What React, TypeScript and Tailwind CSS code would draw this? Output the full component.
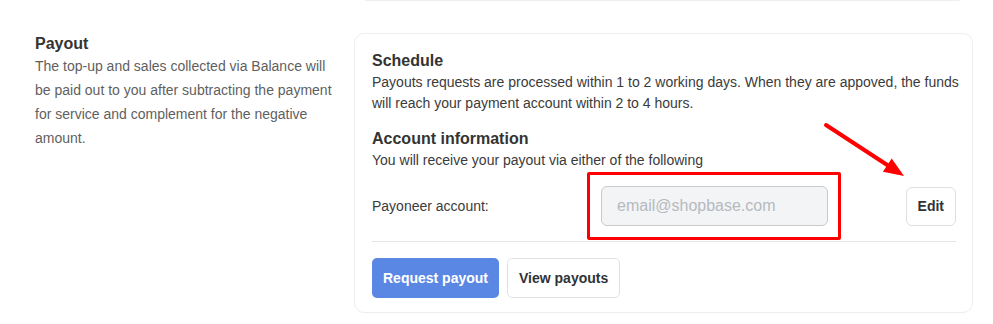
import React from "react";

const font = { fontFamily: '"Liberation Sans", Arial, sans-serif' };

const AnnotationArrow = () => (
  <svg
    className="absolute left-[466px] top-[82px] pointer-events-none"
    width="90"
    height="65"
    viewBox="0 0 90 65"
  >
    <line x1="5" y1="9" x2="67" y2="49.5" stroke="#ff0000" strokeWidth="4" strokeLinecap="round" />
    <polygon points="83,60 61.9,55.8 70.7,42.4" fill="#ff0000" />
  </svg>
);

const PayoutCard = () => {
  return (
    <div className="relative w-[619px] shrink-0 rounded-[10px] border border-[#eeeeee] bg-white pl-[17px] pr-[16px] pt-[16px] pb-[14px] text-[#3b3b3b]">
      <h2 className="text-[16px] leading-[22px] font-bold text-[#333333]">Schedule</h2>
      <p className="mr-[-10px] text-[14px] leading-[21px]">
        Payouts requests are processed within 1 to 2 working days. When they are appoved, the funds
        will reach your payment account within 2 to 4 hours.
      </p>

      <h2 className="mt-[14px] text-[16px] leading-[22px] font-bold text-[#333333]">
        Account information
      </h2>
      <p className="text-[14px] leading-[21px]">You will receive your payout via either of the following</p>

      <div className="mt-[15px] flex items-center">
        <span className="w-[229px] shrink-0 text-[14px]">Payoneer account:</span>
        <div className="relative">
          <input
            disabled
            placeholder="email@shopbase.com"
            className="h-[40px] w-[227px] rounded-[6px] border border-[#c8cacd] bg-[#f3f4f6] px-[15px] text-[16px] placeholder:text-[#b6b9bd]"
            style={font}
          />
          <div className="pointer-events-none absolute left-[-14px] top-[-14px] h-[68px] w-[254px] border-[3.5px] border-[#ff0000] rounded-[2px]" />
        </div>
        <button
          className="ml-auto h-[39px] rounded-[6px] border border-[#dcdfe3] bg-white px-[11px] text-[14px] font-bold text-[#2f3337]"
          style={font}
        >
          Edit
        </button>
      </div>

      <div className="mt-[15px] border-t border-[#e6e6e6]" />

      <div className="mt-[16px] flex gap-[8px]">
        <button
          className="h-[40px] rounded-[5px] bg-[#5b87e4] px-[11px] text-[14px] font-bold text-white"
          style={font}
        >
          Request payout
        </button>
        <button
          className="h-[40px] rounded-[5px] border border-[#dfe3e8] bg-white px-[11px] text-[14px] font-bold text-[#2f3337]"
          style={font}
        >
          View payouts
        </button>
      </div>

      <AnnotationArrow />
    </div>
  );
};

export default function App() {
  return (
    <div className="h-[324px] w-[993px] overflow-hidden bg-white" style={font}>
      <div className="ml-[360px] mt-[-9px] h-[10px] w-[605px] rounded-b-[8px] border border-t-0 border-[#eeeeee]" />
      <div className="mt-[32px] flex">
        <div className="ml-[35px] w-[319px] shrink-0">
          <h1 className="mt-[1px] text-[16px] leading-[20px] font-bold text-[#333333]">Payout</h1>
          <p className="w-[300px] text-[14px] leading-[24px] text-[#5f5f5f]">
            The top-up and sales collected via Balance will be paid out to you after subtracting the
            payment for service and complement for the negative amount.
          </p>
        </div>
        <PayoutCard />
      </div>
    </div>
  );
}
